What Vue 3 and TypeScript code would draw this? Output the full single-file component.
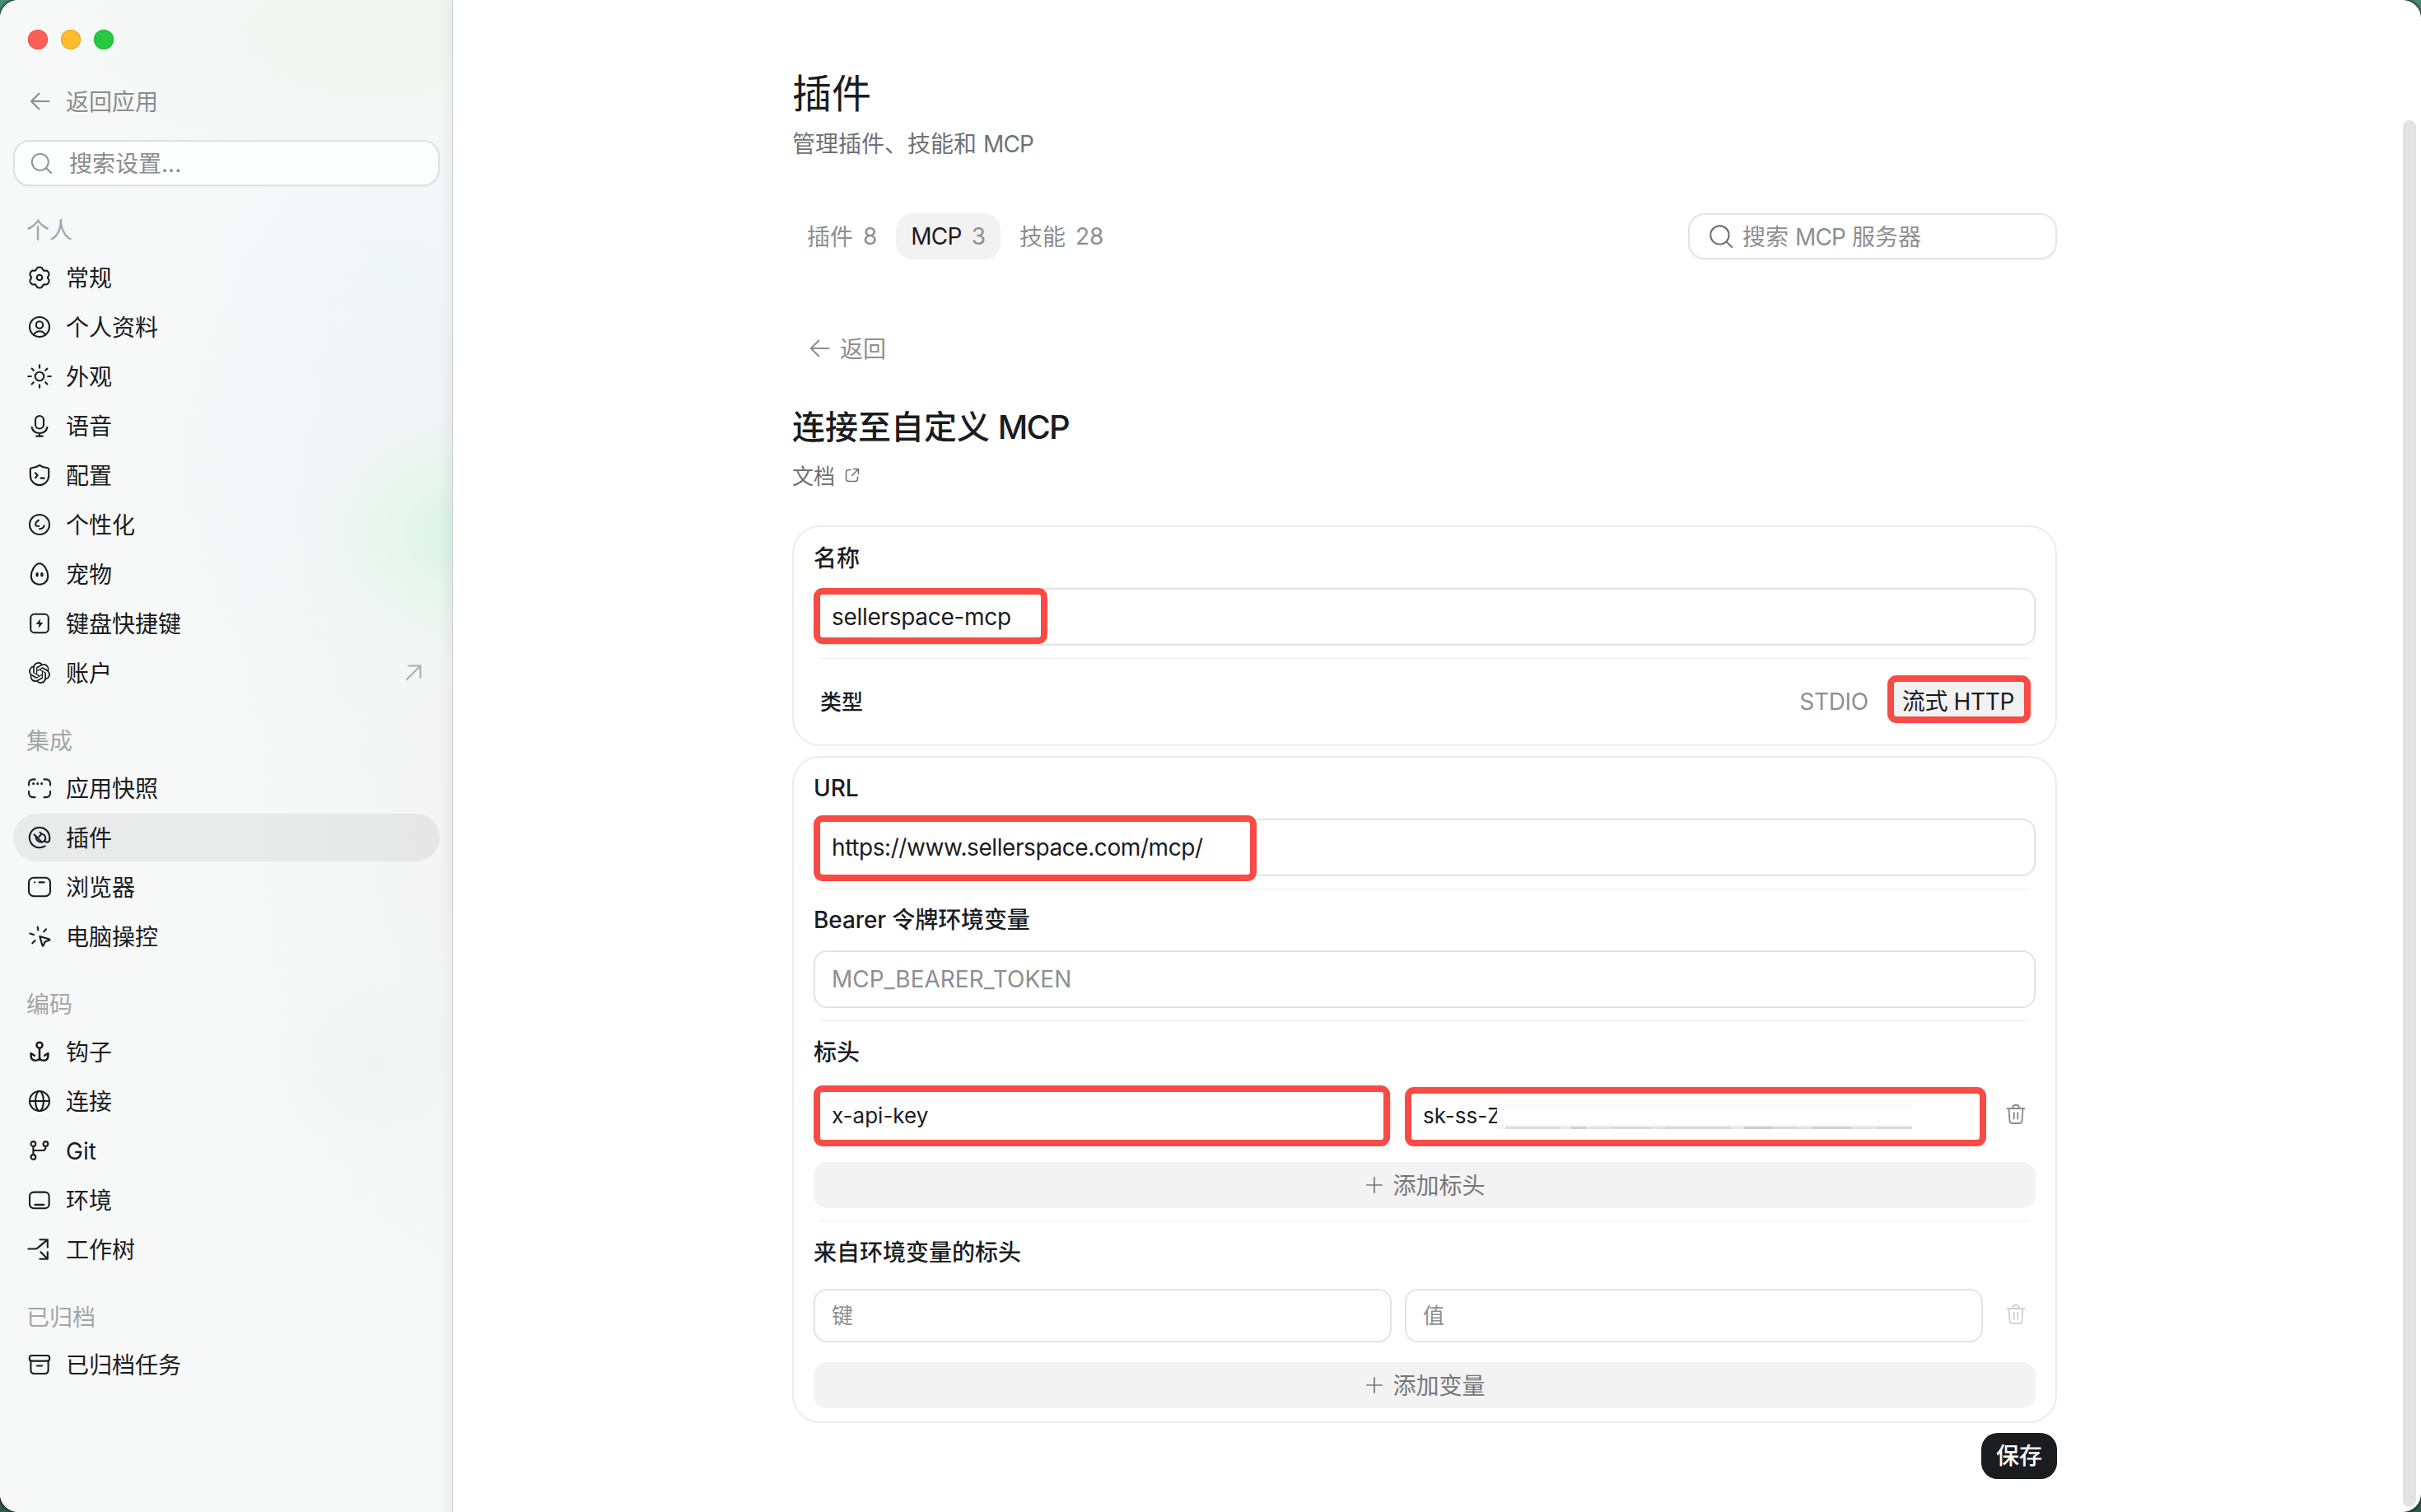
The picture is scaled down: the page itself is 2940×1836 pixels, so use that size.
<script setup lang="ts">
interface NavItem {
  label: string
  icon: string
  active?: boolean
  external?: boolean
}
interface NavGroup {
  title: string
  items: NavItem[]
}

// Six-lobed gear outline, sampled around a 28px box.
const gearPath = (() => {
  const pts: string[] = []
  for (let i = 0; i < 120; i++) {
    const t = (i / 120) * Math.PI * 2
    const r = 11.5 - 1.3 * Math.cos(6 * t) - 0.3 * Math.cos(12 * t)
    pts.push(`${(14 + r * Math.cos(t)).toFixed(2)} ${(14 + r * Math.sin(t)).toFixed(2)}`)
  }
  return `M${pts.join('L')}Z`
})()

const icons: Record<string, string> = {
  gear: `<path d="${gearPath}"/><circle cx="14" cy="14" r="3.3"/>`,
  user: '<circle cx="14" cy="14" r="12"/><circle cx="14" cy="11.500" r="4.200"/><path d="M7 23.500c1.400-2.800 4-4.200 7-4.200s5.600 1.400 7 4.200"/>',
  sun: '<circle cx="14" cy="14" r="5.300"/><path d="M14 .2v3.600M14 24.200v3.600M.2 14h3.600M24.200 14h3.600M4.600 4.600l2.200 2.200M21.200 21.200l2.200 2.200M4.600 23.400l2.200-2.200M21.200 6.800l2.200-2.200"/>',
  mic: '<rect x="9" y="2" width="10" height="15.500" rx="5"/><path d="M4.600 15.800c1 4.600 4.800 7.200 9.400 7.200s8.400-2.600 9.400-7.200M14 23v3.600M10.200 26.600h7.600"/>',
  shield: '<path d="M14 1.800c2.600 2 6 3.200 9.600 3.500 1 .1 1.600.8 1.600 1.700v7.500C25.200 21 20 26 14 26S2.800 21 2.800 14.500V7c0-.9.600-1.600 1.600-1.700C8 5 11.400 3.800 14 1.800Z"/><path d="M9 11.300l2.600 3-2.600 3M15.400 17.600h4.400"/>',
  face: '<circle cx="14" cy="14" r="12"/><path d="M13 8.600c-2.400 1.400-3.800 3.400-3.800 5.400 0 1.600 1.200 2.200 4 1.900M19.600 15.300c-.8 2.500-3 4-5.600 4"/>',
  egg: '<path d="M14 1.300c5.200 0 10.200 8.600 10.200 15.200 0 6-4.200 10.200-10.200 10.200S3.800 22.500 3.800 16.500C3.800 9.900 8.800 1.300 14 1.300Z"/><rect x="9.500" y="12" width="3.200" height="5.400" rx="1.600" fill="currentColor" stroke="none"/><rect x="15.300" y="12" width="3.200" height="5.400" rx="1.600" fill="currentColor" stroke="none"/>',
  key: '<rect x="3.200" y="2.800" width="21.600" height="22.400" rx="4.500"/><path d="M15.300 8.200l-5.600 6.800h3.700l-.9 5 5.800-7h-3.800Z" fill="currentColor" stroke="none"/>',
  knot: '<path transform="translate(1 1) scale(1.083)" fill="currentColor" stroke="none" d="M22.2819 9.8211a5.9847 5.9847 0 0 0-.5157-4.9108 6.0462 6.0462 0 0 0-6.5098-2.9A6.0651 6.0651 0 0 0 4.9807 4.1818a5.9847 5.9847 0 0 0-3.9977 2.9 6.0462 6.0462 0 0 0 .7427 7.0966 5.98 5.98 0 0 0 .511 4.9107 6.051 6.051 0 0 0 6.5146 2.9001A5.9847 5.9847 0 0 0 13.2599 24a6.0557 6.0557 0 0 0 5.7718-4.2058 5.9894 5.9894 0 0 0 3.9977-2.9001 6.0557 6.0557 0 0 0-.7475-7.0729zm-9.022 12.6081a4.4755 4.4755 0 0 1-2.8764-1.0408l.1419-.0804 4.7783-2.7582a.7948.7948 0 0 0 .3927-.6813v-6.7369l2.02 1.1686a.071.071 0 0 1 .038.052v5.5826a4.504 4.504 0 0 1-4.4945 4.4944zm-9.6607-4.1254a4.4708 4.4708 0 0 1-.5346-3.0137l.142.0852 4.783 2.7582a.7712.7712 0 0 0 .7806 0l5.8428-3.3685v2.3324a.0804.0804 0 0 1-.0332.0615L9.74 19.9502a4.4992 4.4992 0 0 1-6.1408-1.6464zM2.3408 7.8956a4.485 4.485 0 0 1 2.3655-1.9728V11.6a.7664.7664 0 0 0 .3879.6765l5.8144 3.3543-2.0201 1.1685a.0757.0757 0 0 1-.071 0l-4.8303-2.7865A4.504 4.504 0 0 1 2.3408 7.872zm16.5963 3.8558L13.1038 8.364 15.1192 7.2a.0757.0757 0 0 1 .071 0l4.8303 2.7913a4.4944 4.4944 0 0 1-.6765 8.1042v-5.6772a.79.79 0 0 0-.407-.667zm2.0107-3.0231l-.142-.0852-4.7735-2.7818a.7759.7759 0 0 0-.7854 0L9.409 9.2297V6.8974a.0662.0662 0 0 1 .0284-.0615l4.8303-2.7866a4.4992 4.4992 0 0 1 6.6802 4.66zM8.3065 12.863l-2.02-1.1638a.0804.0804 0 0 1-.038-.0567V6.0742a4.4992 4.4992 0 0 1 7.3757-3.4537l-.142.0805L8.704 5.459a.7948.7948 0 0 0-.3927.6813zm1.0976-2.3654l2.602-1.4998 2.6069 1.4998v2.9994l-2.5974 1.4997-2.6067-1.4997Z"/>',
  snapshot: '<path d="M1 10.500V8.500C1 5.500 3 3.400 6 3.400h2.500M19.500 3.400H22c3 0 5 2.100 5 5.100v2M27 18v2c0 3-2 5.100-5 5.100h-2.500M8.500 25.100H6c-3 0-5-2.100-5-5.100v-2"/><path d="M6.600 8.500h.01M11.700 8.500h.01M16.600 8.500h.01" stroke-width="3"/>',
  plug: '<path d="M20.600 24.300A12.200 12.200 0 1 1 26.200 14v2.600c0 1.900-1.200 3-2.800 3-1.300 0-2.300-.5-3.400-1.600"/><path d="M9.800 12.600l6.800 7c2.800-.2 4.800-2.200 4.600-5-.2-2.600-2.200-4.600-4.600-4.800M9.800 12.600c-.6 3.800 2.200 7.200 6.800 7M9.800 12.600l-2.200-2.200M16.600 9.800l-3.200 3.200M16.600 9.800l-2-2"/>',
  browser: '<rect x="1" y="2.800" width="26" height="22.400" rx="6"/><path d="M8.200 8.400h.01M13.600 8.400h6"/>',
  pointer: '<path d="M11.700 2.600l.7 3.900M22 5.300l-2.800 3.100M2.400 10.600l4.600 1.500M8.500 19l-3.200 3.400M14.300 14.100l11.600 3.500c.6.200.6.900.1 1.100L20.600 20.500l-2 4.800c-.2.500-.9.500-1.100-.1Z"/>',
  anchor: '<g stroke-width="2.500"><circle cx="14" cy="6.200" r="3.500"/><path d="M14 9.800V24M3.600 16.200v2.600c0 3.800 2.200 6 5.400 6 2.900 0 5-1.700 5-4.400 0 2.700 2.100 4.400 5 4.400 3.200 0 5.400-2.200 5.400-6v-2.600M3.600 16l4.300 2.800M24.400 16l-4.300 2.800"/></g>',
  globe: '<circle cx="14" cy="14" r="12"/><ellipse cx="14" cy="14" rx="4.900" ry="12"/><path d="M2 14h24"/>',
  git: '<circle cx="6.400" cy="6" r="2.900"/><circle cx="21.400" cy="6" r="2.900"/><circle cx="6.400" cy="22" r="2.900"/><path d="M6.400 9v10M21.400 9v1c0 2.400-1.600 4-4 4H6.400"/>',
  env: '<rect x="2" y="4.600" width="23.600" height="19.600" rx="5"/><path d="M8.500 19.900h10.800"/>',
  tree: '<path d="M.3 13.500h8.400c1.200 0 2.100-.3 3-1.100L23.600 2.400M14.400 2.200h9.400v9.400M15.400 17.300l8.400 8.400M14.400 25.800h9.400v-8.600"/>',
  archive: '<rect x="1.800" y="3" width="24.400" height="6.600" rx="2.800"/><path d="M3.400 9.600v10.800c0 2.900 1.800 4.600 4.600 4.600h12c2.800 0 4.600-1.700 4.600-4.600V9.600M11 15.500h6"/>',
}

const groups: NavGroup[] = [
  {
    title: '个人',
    items: [
      { label: '常规', icon: 'gear' },
      { label: '个人资料', icon: 'user' },
      { label: '外观', icon: 'sun' },
      { label: '语音', icon: 'mic' },
      { label: '配置', icon: 'shield' },
      { label: '个性化', icon: 'face' },
      { label: '宠物', icon: 'egg' },
      { label: '键盘快捷键', icon: 'key' },
      { label: '账户', icon: 'knot', external: true },
    ],
  },
  {
    title: '集成',
    items: [
      { label: '应用快照', icon: 'snapshot' },
      { label: '插件', icon: 'plug', active: true },
      { label: '浏览器', icon: 'browser' },
      { label: '电脑操控', icon: 'pointer' },
    ],
  },
  {
    title: '编码',
    items: [
      { label: '钩子', icon: 'anchor' },
      { label: '连接', icon: 'globe' },
      { label: 'Git', icon: 'git' },
      { label: '环境', icon: 'env' },
      { label: '工作树', icon: 'tree' },
    ],
  },
  {
    title: '已归档',
    items: [{ label: '已归档任务', icon: 'archive' }],
  },
]

const tabs = [
  { label: '插件', count: 8, active: false },
  { label: 'MCP', count: 3, active: true },
  { label: '技能', count: 28, active: false },
]
</script>

<template>
  <div class="desktop">
    <div class="window">
      <aside class="sidebar">
        <div class="lights">
          <span class="light red"></span>
          <span class="light yellow"></span>
          <span class="light green"></span>
        </div>
        <div class="back-app">
          <svg class="icon" viewBox="0 0 28 28"><path d="M13.500 4.500L4 14l9.500 9.500M4 14h21.500" /></svg>
          <span class="cjk">返回应用</span>
        </div>
        <div class="side-search">
          <svg class="icon thin" viewBox="0 0 28 28"><circle cx="12.800" cy="12.800" r="10" /><path d="M20 20l6 6" /></svg>
          <span class="cjk">搜索设置...</span>
        </div>
        <nav>
          <section v-for="g in groups" :key="g.title" class="group">
            <h3>{{ g.title }}</h3>
            <ul>
              <li v-for="it in g.items" :key="it.label" :class="{ active: it.active }">
                <svg class="icon" viewBox="0 0 28 28" v-html="icons[it.icon]"></svg>
                <span class="cjk">{{ it.label }}</span>
                <svg v-if="it.external" class="ext" viewBox="0 0 20 20"><path d="M1.500 18.500L18.500 1.500M3.500 1.500h15v15" /></svg>
              </li>
            </ul>
          </section>
        </nav>
      </aside>

      <main class="main">
        <div class="content">
          <h1>插件</h1>
          <p class="subtitle">管理插件、技能和 <span class="lat">MCP</span></p>

          <div class="toolbar">
            <div class="tabs">
              <button v-for="t in tabs" :key="t.label" :class="['tab', { on: t.active }]">
                <span :class="t.active ? 'lat' : 'cjk'">{{ t.label }}</span><span class="count">{{ t.count }}</span>
              </button>
            </div>
            <div class="search">
              <svg viewBox="0 0 28 28"><circle cx="12.400" cy="12.400" r="11.200" /><path d="M20.600 20.600l6.600 6.600" /></svg>
              <span class="cjk">搜索 <span class="lat">MCP</span> 服务器</span>
            </div>
          </div>

          <div class="back">
            <svg class="icon" viewBox="0 0 28 28"><path d="M14.300 4.500L4.800 14l9.500 9.500M4.800 14h21.700" /></svg>
            <span class="cjk">返回</span>
          </div>

          <h2>连接至自定义 <span class="lat">MCP</span></h2>
          <a class="docs">
            <span class="cjk">文档</span>
            <svg viewBox="0 0 18 18"><path d="M7 2.500H5C2.800 2.500 1.500 3.800 1.500 6v7c0 2.200 1.300 3.500 3.500 3.500h7c2.200 0 3.500-1.300 3.500-3.500v-2M10.500 1.500h6v6M16.500 1.500L8.500 9.500" /></svg>
          </a>

          <div class="card">
            <label class="label">名称</label>
            <div class="input name">sellerspace-mcp<i class="mark mark-name"></i></div>
            <hr />
            <div class="type-row">
              <span class="type-label cjk">类型</span>
              <div class="segment">
                <span class="seg">STDIO</span>
                <span class="seg on">流式 HTTP<i class="mark mark-type"></i></span>
              </div>
            </div>
          </div>

          <div class="card second">
            <label class="label latin">URL</label>
            <div class="input url">https://www.sellerspace.com/mcp/<i class="mark mark-url"></i></div>
            <hr />
            <label class="label mixed">Bearer 令牌环境变量</label>
            <div class="input hint">MCP_BEARER_TOKEN</div>
            <hr />
            <label class="label tall">标头</label>
            <div class="pair">
              <div class="input small">x-api-key<i class="mark mark-key"></i></div>
              <div class="input small"><span class="secret">sk-ss-Z</span><span class="smear"></span><i class="mark mark-val"></i></div>
              <svg class="trash" viewBox="0 0 24 26"><path d="M1.500 6h21M8 6C8 3.200 9.600 1.800 12 1.800S16 3.200 16 6M3.500 6l1 15c.2 2 1.200 3 3 3h9c1.800 0 2.800-1 3-3l1-15M9.700 11v7.500M14.300 11v7.500" /></svg>
            </div>
            <button class="add"><svg viewBox="0 0 22 22"><path d="M11 1v20M1 11h20" /></svg><span class="cjk">添加标头</span></button>
            <hr />
            <label class="label tall">来自环境变量的标头</label>
            <div class="pair">
              <div class="input small hint"><span class="cjk">键</span></div>
              <div class="input small hint"><span class="cjk">值</span></div>
              <svg class="trash off" viewBox="0 0 24 26"><path d="M1.500 6h21M8 6C8 3.200 9.600 1.800 12 1.800S16 3.200 16 6M3.500 6l1 15c.2 2 1.200 3 3 3h9c1.800 0 2.800-1 3-3l1-15M9.700 11v7.500M14.300 11v7.500" /></svg>
            </div>
            <button class="add last"><svg viewBox="0 0 22 22"><path d="M11 1v20M1 11h20" /></svg><span class="cjk">添加变量</span></button>
          </div>

          <div class="actions"><button class="save">保存</button></div>
        </div>
        <div class="scrollbar"></div>
      </main>
    </div>
  </div>
</template>

<style>
body {
  margin: 0;
  overflow: hidden;
}
</style>

<style scoped>
* {
  box-sizing: border-box;
}
.desktop {
  width: 2940px;
  height: 1836px;
  background: linear-gradient(#468c72, #2e5a4a);
  font-family: Inter, "Noto Sans CJK SC", sans-serif;
  font-size: 28px;
  color: #1a1c1f;
}
.window {
  display: flex;
  height: 100%;
  border-radius: 22px;
  overflow: hidden;
  background: #fff;
  box-shadow: 0 0 3px 1px #111;
}
h1, h2, h3, p, ul {
  margin: 0;
  padding: 0;
  list-style: none;
  font-weight: 400;
}
button {
  border: 0;
  padding: 0;
  font: inherit;
  color: inherit;
}
svg {
  fill: none;
  stroke: currentColor;
  stroke-width: 2.1;
  stroke-linecap: round;
  stroke-linejoin: round;
  overflow: visible;
  flex: none;
}
.cjk {
  line-height: 40px;
  padding-top: 1px;
}
.lat {
  letter-spacing: -0.028em;
}

/* Sidebar */
.sidebar {
  width: 550px;
  flex: none;
  padding: 36px 16px 0;
  border-right: 1px solid #cdcfcf;
  background:
    linear-gradient(to left, rgba(0, 0, 0, 0.045), rgba(0, 0, 0, 0) 16px),
    radial-gradient(ellipse 200px 150px at 575px 650px, rgba(205, 243, 221, 0.75), rgba(218, 246, 230, 0.5) 45%, rgba(228, 245, 237, 0)),
    radial-gradient(ellipse 120px 110px at 455px 1290px, rgba(239, 241, 241, 0.6), rgba(241, 242, 242, 0)),
    radial-gradient(ellipse 220px 180px at 470px 320px, rgba(239, 246, 248, 0.5), rgba(241, 246, 248, 0)),
    radial-gradient(ellipse 420px 200px at 460px 40px, rgba(241, 246, 242, 1), rgba(243, 247, 243, 0)),
    radial-gradient(ellipse 280px 640px at 549px 1000px, #f4f4f4, rgba(246, 247, 247, 0)),
    radial-gradient(ellipse 380px 420px at 549px 560px, #f1f4f5, rgba(244, 247, 247, 0)),
    #f7f9f9;
}
.lights {
  display: flex;
  gap: 16px;
  padding-left: 18px;
}
.light {
  width: 24px;
  height: 24px;
  border-radius: 50%;
}
.red { background: #ff5f57; box-shadow: inset 0 0 0 1px #e9534c; }
.yellow { background: #febc2e; box-shadow: inset 0 0 0 1px #e3a52a; }
.green { background: #28c840; box-shadow: inset 0 0 0 1px #24b53a; }
.icon {
  width: 28px;
  height: 28px;
}
.back-app {
  display: flex;
  align-items: center;
  gap: 18px;
  height: 58px;
  margin-top: 34px;
  padding-left: 18px;
  color: #8b8d8d;
}
.side-search {
  display: flex;
  align-items: center;
  gap: 20px;
  height: 56px;
  width: 518px;
  margin-top: 18px;
  padding-left: 18px;
  border: 2px solid #e0e2e2;
  border-radius: 20px;
  background: #fdfefe;
  box-shadow: 0 1px 2px rgba(0, 0, 0, 0.05);
  color: #8b8c8d;
}
.thin {
  stroke-width: 1.8;
}
.group h3 {
  height: 58px;
  margin-top: 24px;
  padding: 1px 0 0 16px;
  line-height: 58px;
  font-size: 28px;
  color: #a3a5a5;
}
.group ul {
  display: flex;
  flex-direction: column;
  gap: 2px;
}
.group li {
  display: flex;
  align-items: center;
  gap: 18px;
  width: 518px;
  height: 58px;
  padding: 0 22px 0 18px;
  border-radius: 29px;
}
.group li.active {
  background: rgba(0, 0, 0, 0.055);
}
.ext {
  width: 20px;
  height: 20px;
  margin-left: auto;
  color: #acaeae;
  stroke-linecap: butt;
  stroke-linejoin: miter;
}

/* Main */
.main {
  flex: 1;
  display: flex;
  justify-content: space-between;
  padding-left: 412px;
}
.content {
  width: 1536px;
  padding-top: 80px;
}
.scrollbar {
  width: 16px;
  height: 1684px;
  margin: 146px 6px 0 0;
  border-radius: 8px;
  background: #e3e3e3;
}
h1 {
  height: 66px;
  padding-top: 1px;
  line-height: 66px;
  font-size: 48px;
}
.subtitle {
  height: 40px;
  margin-top: 8px;
  padding-top: 1px;
  line-height: 40px;
  color: #707274;
}
.toolbar {
  display: flex;
  justify-content: space-between;
  margin-top: 65px;
}
.tabs {
  display: flex;
  gap: 5px;
}
.tab {
  display: flex;
  align-items: center;
  gap: 12px;
  height: 56px;
  padding: 0 18px;
  border-radius: 20px;
  background: none;
  color: #8e8f90;
}
.tab.on {
  background: #f2f2f2;
  color: #1a1c1f;
}
.count {
  color: #8e8f90;
}
.search {
  display: flex;
  align-items: center;
  gap: 12px;
  width: 448px;
  height: 56px;
  padding-left: 24px;
  border: 2px solid #e5e5e5;
  border-radius: 20px;
  box-shadow: 0 1px 2px rgba(0, 0, 0, 0.05);
  color: #8e8f90;
}
.search svg {
  width: 28px;
  height: 28px;
  color: #66686a;
  stroke-width: 1.9;
}
.back {
  display: flex;
  align-items: center;
  gap: 12px;
  height: 56px;
  margin-top: 80px;
  padding-left: 18px;
  color: #8e8f90;
}
h2 {
  height: 56px;
  margin-top: 40px;
  line-height: 56px;
  font-size: 40px;
  font-weight: 500;
}
h2 .lat {
  margin-left: -1px;
  letter-spacing: -0.045em;
}
.docs {
  display: flex;
  align-items: center;
  gap: 12px;
  height: 36px;
  margin-top: 13px;
  font-size: 26px;
  color: #707274;
}
.docs svg {
  width: 18px;
  height: 18px;
  margin-top: -2px;
  stroke-width: 1.6;
}
.card {
  margin-top: 42px;
  padding: 0 24px;
  border: 2px solid #ececec;
  border-radius: 34px;
}
.card.second {
  margin-top: 12px;
}
.label {
  display: block;
  height: 74px;
  padding-top: 1px;
  line-height: 74px;
  font-weight: 500;
}
.label.latin,
.label.mixed {
  padding-top: 0;
  letter-spacing: -0.1px;
}
.label.tall {
  height: 82px;
  padding-top: 0;
  line-height: 76px;
}
.input {
  position: relative;
  display: flex;
  align-items: center;
  height: 70px;
  padding-left: 20px;
  border: 2px solid #e4e4e4;
  border-radius: 16px;
}
.input.name {
  letter-spacing: -0.3px;
}
.input.url {
  letter-spacing: -0.42px;
}
.input.small {
  width: 702px;
  height: 65px;
  font-size: 26px;
}
.hint {
  color: #8e8f90;
}
hr {
  height: 1px;
  margin: 15px 8px 0;
  border: 0;
  background: #ebebeb;
}
.type-row {
  display: flex;
  align-items: center;
  justify-content: space-between;
  height: 104px;
  padding: 0 8px;
}
.type-label {
  font-size: 26px;
  font-weight: 500;
}
.segment {
  display: flex;
  gap: 5px;
}
.seg {
  position: relative;
  padding: 0 18px;
  line-height: 54px;
  letter-spacing: -0.35px;
  color: #8e8f90;
}
.seg.on {
  border-radius: 16px;
  background: #f2f2f2;
  color: #1a1c1f;
}
.pair {
  display: flex;
  align-items: center;
  gap: 16px;
}
.trash {
  width: 24px;
  height: 26px;
  margin: -3px 0 0 12px;
  color: #8a8c8d;
  stroke-width: 1.9;
}
.trash.off {
  color: #d0d1d1;
}
.add {
  display: flex;
  align-items: center;
  justify-content: center;
  gap: 12px;
  width: 100%;
  height: 56px;
  margin-top: 24px;
  padding-left: 3px;
  border-radius: 16px;
  background: #f3f3f3;
  color: #767779;
}
.add svg {
  width: 20px;
  height: 20px;
  stroke-width: 1.9;
}
.add.last {
  margin-bottom: 16px;
}
.actions {
  display: flex;
  justify-content: flex-end;
  margin-top: 12px;
}
.save {
  width: 92px;
  height: 56px;
  line-height: 54px;
  border-radius: 20px;
  background: #1a1c1f;
  color: #fff;
  font-weight: 500;
}

/* Highlight frames laid over fields */
.mark {
  position: absolute;
  border: 8px solid #f84b46;
  border-radius: 11px;
}
.mark-name { left: -2px; top: -2px; width: 284px; height: 68px; }
.mark-url { left: -2px; top: -6px; width: 538px; height: 80px; }
.mark-type { right: -2px; top: -5px; width: 174px; height: 58px; }
.mark-key { left: -2px; top: -6px; width: 700px; height: 74px; }
.mark-val { left: -2px; top: -4px; width: 706px; height: 72px; }
.secret {
  width: 90px;
  white-space: nowrap;
}
/* Redaction strip covering the rest of the key */
.smear {
  position: relative;
  width: 504px;
  height: 32px;
  background:
    linear-gradient(90deg, #f4f4f4 0 10px, #dcdcdc 10px 76px, #e8e8e8 76px 90px, #cfcfcf 90px 108px, #e4e4e4 108px 138px, #dadada 138px 188px, #e4e4e4 188px 204px, #d6d6d6 204px 284px, #e8e8e8 284px 300px, #cbcbcb 300px 334px, #dadada 334px 366px, #e4e4e4 366px 382px, #d0d0d0 382px 430px, #e2e2e2 430px 462px, #d8d8d8 462px) 0 100% / 100% 3px no-repeat,
    linear-gradient(#fafafa, #fff 45%, #fff 80%, #e8e8e8);
}
</style>
